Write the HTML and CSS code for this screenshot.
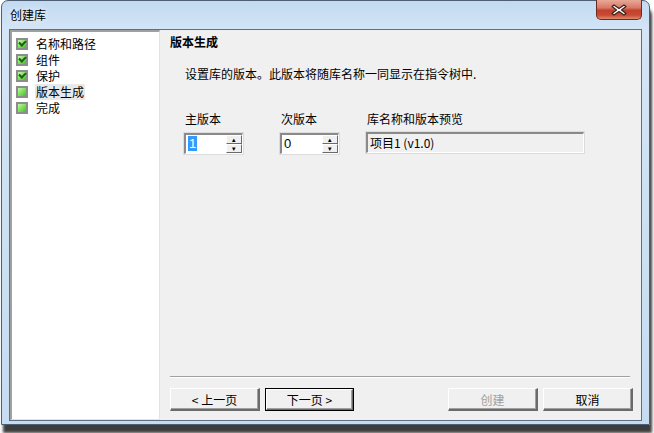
FILE: index.html
```html
<!DOCTYPE html>
<html lang="zh">
<head>
<meta charset="utf-8">
<link rel="stylesheet" href="styles.css">
</head>
<body>
<div class="window">
  <div class="titlebar">
    <span class="title">创建库</span>
    <button class="close" aria-label="关闭">
      <svg width="18" height="12" viewBox="0 0 18 12">
        <path d="M4 1 L9 4.5 L14 1 L16 2.5 L11.5 6 L16 9.5 L14 11 L9 7.5 L4 11 L2 9.5 L6.5 6 L2 2.5 Z" fill="#fff" stroke="#3b2320" stroke-width="1.2" stroke-linejoin="round"/>
      </svg>
    </button>
  </div>
  <div class="client">
    <div class="tree">
      <div class="item"><span class="chk on"></span><span class="lbl">名称和路径</span></div>
      <div class="item"><span class="chk on"></span><span class="lbl">组件</span></div>
      <div class="item"><span class="chk on"></span><span class="lbl">保护</span></div>
      <div class="item"><span class="chk"></span><span class="lbl sel">版本生成</span></div>
      <div class="item"><span class="chk"></span><span class="lbl">完成</span></div>
    </div>
    <div class="pane">
      <div class="heading">版本生成</div>
      <div class="desc">设置库的版本。此版本将随库名称一同显示在指令树中.</div>
      <div class="fields">
        <div class="field f-major">
          <div class="flabel">主版本</div>
          <div class="spin">
            <div class="spin-text"><span class="hl">1</span></div>
            <div class="spin-btns"><span class="sb">&#9652;</span><span class="sb">&#9662;</span></div>
          </div>
        </div>
        <div class="field f-minor">
          <div class="flabel">次版本</div>
          <div class="spin">
            <div class="spin-text">0</div>
            <div class="spin-btns"><span class="sb">&#9652;</span><span class="sb">&#9662;</span></div>
          </div>
        </div>
        <div class="field f-preview">
          <div class="flabel">库名称和版本预览</div>
          <div class="preview">项目1 (v1.0)</div>
        </div>
      </div>
      <div class="spacer"></div>
      <div class="sep"></div>
      <div class="buttons">
        <button class="btn">&lt; 上一页</button>
        <button class="btn default">下一页 &gt;</button>
        <div class="grow"></div>
        <button class="btn disabled">创建</button>
        <button class="btn">取消</button>
      </div>
    </div>
  </div>
</div>
</body>
</html>
```
FILE: styles.css
```css
html, body {
  margin: 0;
  padding: 0;
}
body {
  width: 654px;
  height: 433px;
  background: #ffffff;
  overflow: hidden;
  font-family: "Noto Sans CJK SC", "Liberation Sans", sans-serif;
  font-size: 12px;
  color: #000;
}
.window {
  box-sizing: border-box;
  margin-left: 1px;
  width: 649px;
  height: 425px;
  border: 1px solid #4d5f74;
  border-radius: 7px 7px 0 0;
  background: linear-gradient(to bottom, #c2daf1 0px, #d4e5f6 30px, #c6dcf1 100%);
  box-shadow: 2px 8px 3px rgba(40,40,40,0.9);
  display: flex;
  flex-direction: column;
}
.titlebar {
  height: 28px;
  display: flex;
  align-items: flex-start;
  justify-content: space-between;
  padding: 0 7px 0 8px;
  flex: none;
}
.title {
  margin-top: 6px;
  font-size: 12px;
  line-height: 16px;
  color: #000;
  text-shadow: 0 0 6px #fff;
}
.close {
  width: 46px;
  height: 20px;
  margin-top: -1px;
  padding: 0;
  border: 1px solid #6b2a22;
  border-top: none;
  border-radius: 0 0 5px 5px;
  background: linear-gradient(to bottom, #e9a999 0%, #d97a66 40%, #c0412c 55%, #c84c33 80%, #df8a6e 100%);
  display: flex;
  align-items: center;
  justify-content: center;
}
.client {
  flex: 1;
  margin: 0 7px 3px 7px;
  border: 1px solid #5e6f83;
  background: #f0f0f0;
  display: flex;
  min-height: 0;
}
.tree {
  box-sizing: border-box;
  width: 150px;
  flex: none;
  background: #fff;
  border-style: solid;
  border-width: 2px 1px 1px 2px;
  border-color: #a0a0a0 #e3e3e3 #e3e3e3 #a0a0a0;
  padding: 4px 0 0 4px;
}
.item {
  height: 16px;
  display: flex;
  align-items: center;
}
.chk {
  box-sizing: border-box;
  width: 12px;
  height: 12px;
  border: 2px solid #8d8d8d;
  background: linear-gradient(135deg, #c8f5b0 0%, #7ee05a 50%, #3fbf2a 100%);
  position: relative;
  flex: none;
}
.chk.on::after {
  content: "";
  position: absolute;
  left: 1px;
  top: 0px;
  width: 5px;
  height: 3px;
  border-left: 2px solid #1e5e16;
  border-bottom: 2px solid #1e5e16;
  transform: rotate(-45deg);
}
.lbl {
  margin-left: 7px;
  line-height: 16px;
  padding: 0 1px;
}
.lbl.sel {
  background: #e9e9e9;
}
.pane {
  flex: 1;
  display: flex;
  flex-direction: column;
  padding: 0 8px 9px 10px;
}
.heading {
  font-weight: bold;
  margin-top: 4px;
  line-height: 16px;
}
.desc {
  margin-top: 16px;
  padding-left: 15px;
  line-height: 16px;
}
.fields {
  display: flex;
  margin-top: 29px;
  padding-left: 14px;
}
.field {
  display: flex;
  flex-direction: column;
}
.f-major { width: 96px; }
.f-minor { width: 86px; }
.f-preview { width: 218px; }
.flabel {
  line-height: 16px;
  height: 16px;
  padding-left: 1px;
}
.spin {
  box-sizing: border-box;
  margin-top: 6px;
  width: 59px;
  height: 21px;
  border-style: solid;
  border-width: 2px 1px 1px 2px;
  border-color: #8a8a8a #ffffff #ffffff #8a8a8a;
  background: #fff;
  display: flex;
  outline: 1px solid #dcdcdc;
}
.spin-text {
  flex: 1;
  padding-left: 2px;
  line-height: 17px;
  font-family: "Liberation Sans", sans-serif;
  font-size: 13px;
}
.hl {
  background: #3399ff;
  color: #fff;
  padding: 0 1px;
}
.spin-btns {
  width: 16px;
  display: flex;
  flex-direction: column;
}
.sb {
  box-sizing: border-box;
  flex: 1;
  background: #f0f0f0;
  border-style: solid;
  border-width: 1px;
  border-color: #ffffff #6a6a6a #6a6a6a #ffffff;
  font-size: 7px;
  line-height: 7px;
  text-align: center;
  color: #000;
}
.preview {
  box-sizing: border-box;
  margin-top: 5px;
  width: 218px;
  height: 21px;
  border-style: solid;
  border-width: 2px 1px 1px 2px;
  border-color: #8a8a8a #ffffff #ffffff #8a8a8a;
  outline: 1px solid #dcdcdc;
  background: #f0f0f0;
  padding-left: 2px;
  line-height: 17px;
}
.spacer { flex: 1; }
.sep {
  height: 0;
  border-top: 1px solid #a0a0a0;
  border-bottom: 1px solid #ffffff;
  margin-right: 3px;
}
.buttons {
  display: flex;
  margin-top: 10px;
  gap: 5px;
}
.grow { flex: 1; }
.btn {
  box-sizing: border-box;
  width: 90px;
  height: 23px;
  padding: 0;
  font-family: "Noto Sans CJK SC", "Liberation Sans", sans-serif;
  font-size: 12px;
  color: #000;
  background: #f0f0f0;
  border-style: solid;
  border-width: 1px 2px 2px 1px;
  border-color: #ffffff #6a6a6a #6a6a6a #ffffff;
  box-shadow: inset -1px -1px 0 #a0a0a0;
}
.btn.default {
  outline: 1px solid #000;
  outline-offset: -1px;
  border-width: 2px 2px 2px 2px;
  border-color: #ffffff #6a6a6a #6a6a6a #ffffff;
  width: 89px;
}
.btn.disabled {
  color: #a0a0a0;
}
```
